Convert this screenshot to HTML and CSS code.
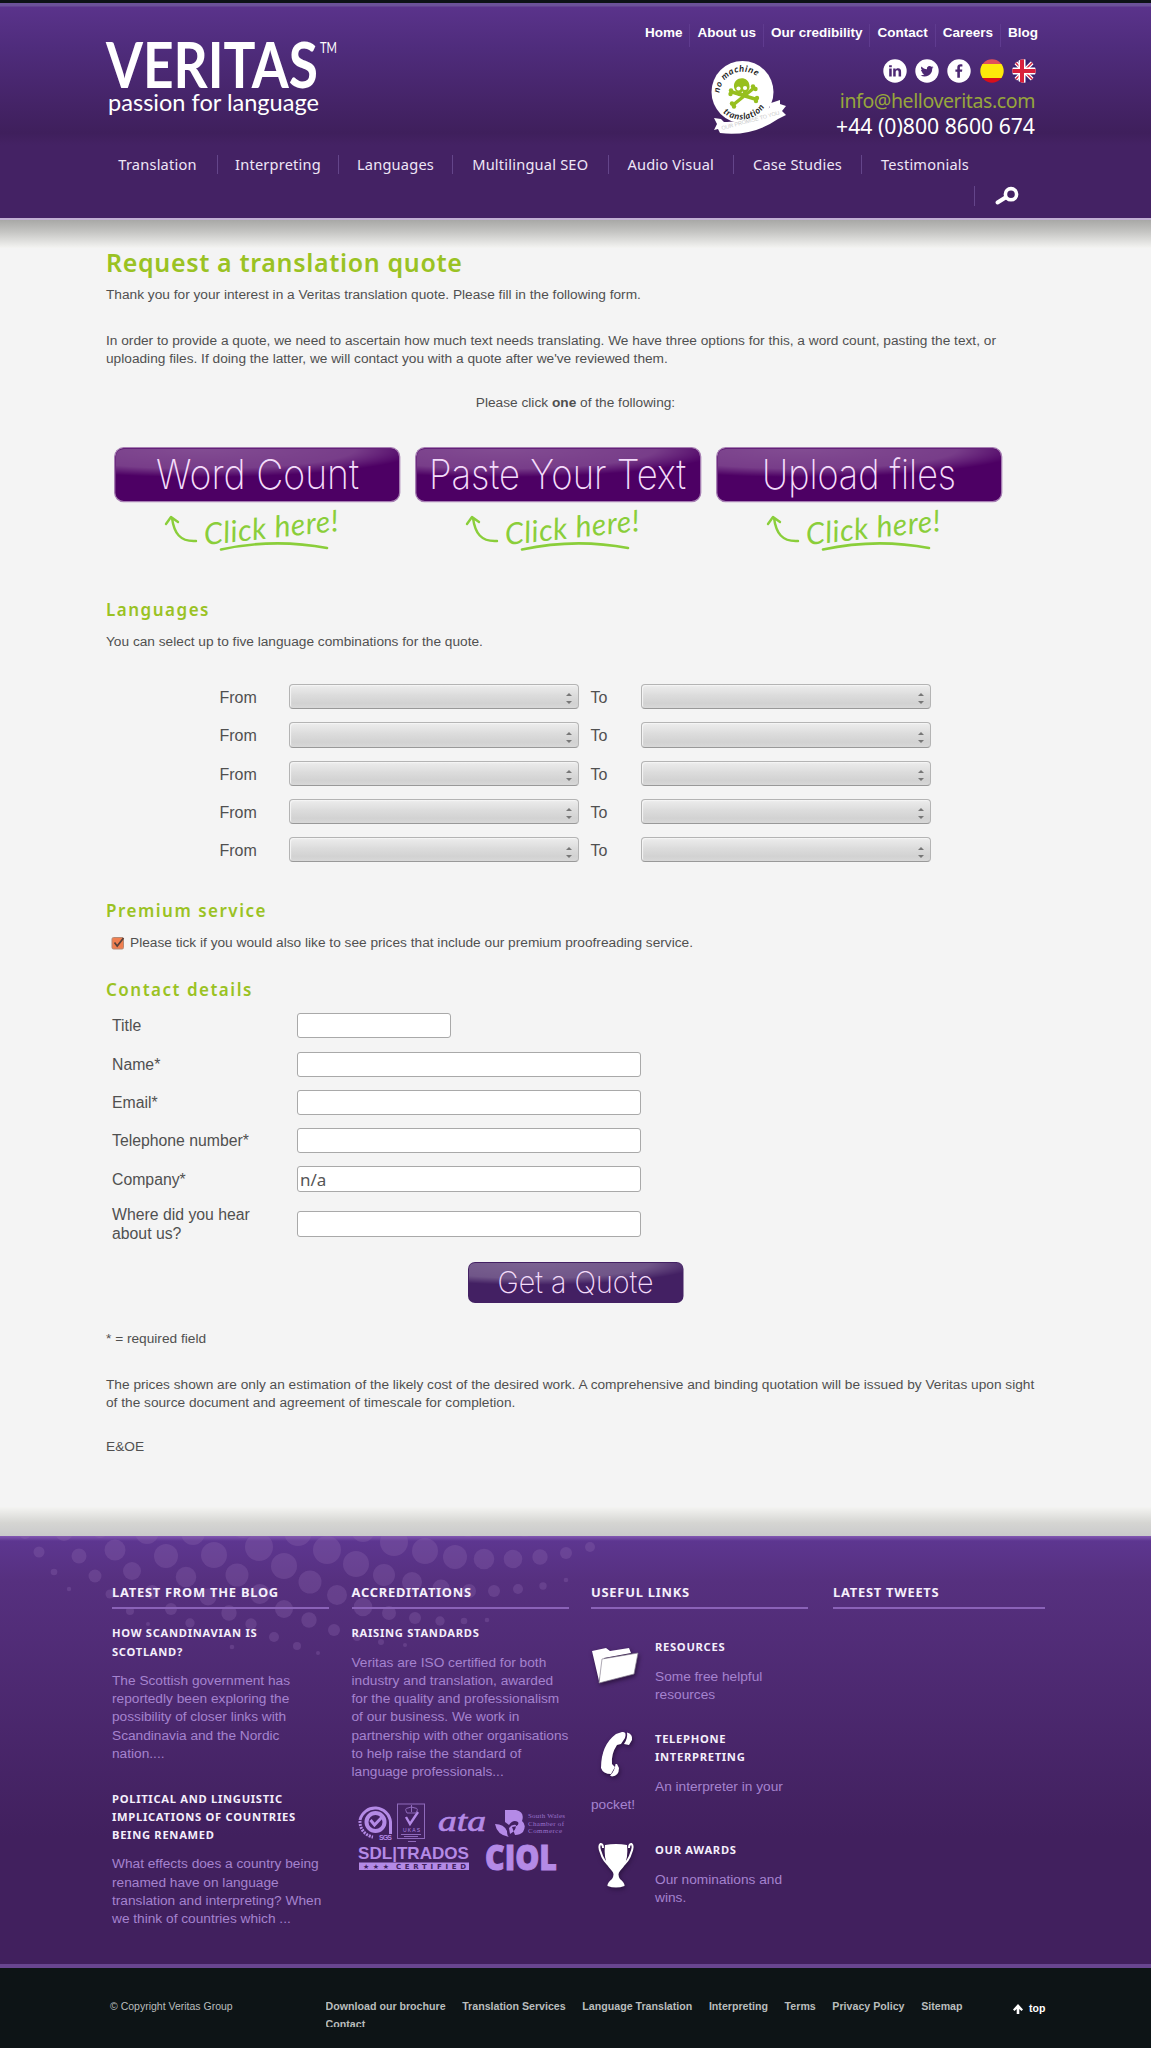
FILE: index.html
```html
<!DOCTYPE html>
<html lang="en">
<head>
<meta charset="utf-8">
<title>Request a translation quote - Veritas</title>
<link rel="stylesheet" href="styles.css">
</head>
<body>
<svg width="0" height="0" class="defs" aria-hidden="true">
  <defs>
    <radialGradient id="gloss" cx=".3" cy="0" r=".78"><stop offset="0" stop-color="#fff" stop-opacity=".3"/><stop offset=".7" stop-color="#fff" stop-opacity=".24"/><stop offset="1" stop-color="#fff" stop-opacity="0"/></radialGradient>
    <clipPath id="disc"><circle cx="12" cy="12" r="11.7"/></clipPath>
    <g id="click" fill="none" stroke="#8ace3a" stroke-linecap="round" stroke-linejoin="round">
      <path stroke-width="2.4" d="M82 94C66 95 60 86 58 71M52 77L57 70L64 75"/>
      <path stroke-width="2.6" d="M107 102.500Q160 91 213 101"/>
    </g>
  </defs>
</svg>
<header class="header">
  <div class="wrap top">
    <svg class="logo" width="240" height="90" viewBox="0 0 240 90" fill="#fff">
      <text class="logo-name" x="1" y="56" textLength="212" lengthAdjust="spacingAndGlyphs">VERITAS</text>
      <text class="logo-tm" x="215" y="20.500" textLength="17" lengthAdjust="spacingAndGlyphs">TM</text>
      <text class="logo-tag" x="3" y="79" textLength="211" lengthAdjust="spacingAndGlyphs">passion for language</text>
    </svg>
    <svg class="badge" width="90" height="90" viewBox="0 0 90 90">
      <path id="arcT" fill="none" d="M19.500 42A23 23 0 1 1 66 38"/>
      <path id="arcB" fill="none" d="M16 49A28 28 0 0 0 69 39"/>
      <circle cx="42.500" cy="37" r="31" fill="#fff"/>
      <path fill="#fff" d="M14 63L21 64L24 67Q50 68 70 52L68 49L80 45L80 49L86 51L82 56L86 60L78 64Q52 82 20 78L18 74L14 75L17 69Z"/>
      <text class="hand"><textPath href="#arcT" startOffset="4">no machine</textPath></text>
      <text class="hand"><textPath href="#arcB" startOffset="11">translation</textPath></text>
      <text class="promise" x="22" y="75" transform="rotate(-15 22 75)" textLength="60">OUR PROMISE TO YOU</text>
      <g stroke="#97bf1e" stroke-width="3.400" stroke-linecap="round"><path d="M32 37L55 44M33 50L54 33"/></g>
      <g fill="#97bf1e"><circle cx="31" cy="35.500" r="2.200"/><circle cx="30.500" cy="39" r="2.200"/><circle cx="57" cy="43" r="2.200"/><circle cx="56" cy="46" r="2.200"/><circle cx="32" cy="48.500" r="2.200"/><circle cx="34" cy="51.500" r="2.200"/><circle cx="53" cy="31.500" r="2.200"/><circle cx="55.500" cy="34" r="2.200"/><path d="M34 32C33 21 49 20 49.500 31C50 36 46 36 46 40L38 41C38 37 34.500 36 34 32Z"/></g>
      <circle cx="38.500" cy="33.500" r="2.100" fill="#fff"/><circle cx="45" cy="33" r="2.100" fill="#fff"/><path d="M41.500 38L42.300 36L43 38Z" fill="#fff"/>
    </svg>
    <div class="contact">
      <nav class="mini"><a>Home</a><a>About us</a><a>Our credibility</a><a>Contact</a><a>Careers</a><a>Blog</a></nav>
      <div class="social">
        <svg width="24" height="24" viewBox="0 0 24 24"><circle cx="12" cy="12" r="11.700" fill="#fff"/><path fill="#4c2873" d="M6.200 9.500h2.500v8H6.200zM6.100 6.200h2.700v2H6.100zM10.200 9.500h2.400v1.200c.6-1 1.400-1.400 2.500-1.400 2.200 0 3 1.300 3 3.600v4.600h-2.500v-4.200c0-1.300-.3-2-1.300-2-1.200 0-1.600.9-1.600 2.200v4h-2.500z"/></svg>
        <svg width="24" height="24" viewBox="0 0 24 24"><circle cx="12" cy="12" r="11.700" fill="#fff"/><path fill="#4c2873" d="M18.500 8.200c-.5.200-1 .4-1.500.4.500-.3 1-.8 1.200-1.400-.5.300-1.100.5-1.700.6a2.700 2.700 0 0 0-4.600 2.400c-2.200-.1-4.200-1.200-5.500-2.800-.7 1.200-.4 2.800.8 3.600-.4 0-.8-.1-1.200-.3 0 1.300.9 2.400 2.100 2.600-.4.100-.8.100-1.200 0 .3 1.100 1.300 1.800 2.500 1.900A5.400 5.400 0 0 1 5.500 16.300a7.600 7.600 0 0 0 11.700-6.800c.5-.3 1-.8 1.300-1.300z"/></svg>
        <svg width="24" height="24" viewBox="0 0 24 24"><circle cx="12" cy="12" r="11.700" fill="#fff"/><path fill="#4c2873" d="M10.300 18.700v-6H8.400v-2.300h1.900V8.600c0-2.200 1.200-3.300 3.200-3.300.9 0 1.600.1 1.900.1v2.200h-1.300c-1 0-1.200.5-1.200 1.200v1.600h2.400l-.3 2.300h-2.100v6z"/></svg>
        <svg width="24" height="24" viewBox="0 0 24 24"><g clip-path="url(#disc)"><path fill="#e0505a" d="M0 0h24v6H0z"/><path fill="#d8101a" d="M0 18h24v6H0z"/><path fill="#fdea0a" d="M0 5h24v14H0z"/></g></svg>
        <svg width="24" height="24" viewBox="0 0 24 24"><g clip-path="url(#disc)"><path fill="#3a2170" d="M0 0h24v24H0z"/><path stroke="#fff" stroke-width="4" d="M0 0L24 24M24 0L0 24"/><path stroke="#d8203c" stroke-width="1.500" d="M0 0L24 24M24 0L0 24"/><path stroke="#fff" stroke-width="7" d="M10 0V24M0 12H24"/><path stroke="#d8203c" stroke-width="4" d="M10 0V24M0 12H24"/></g></svg>
      </div>
      <div class="mail">info@helloveritas.com</div>
      <div class="phone">+44 (0)800 8600 674</div>
    </div>
  </div>
  <nav class="wrap nav"><a>Translation</a><a>Interpreting</a><a>Languages</a><a>Multilingual SEO</a><a>Audio Visual</a><a>Case Studies</a><a>Testimonials</a></nav>
  <div class="wrap search"><svg width="26" height="20" viewBox="0 0 26 20" fill="none" stroke="#fff"><circle cx="18" cy="8.200" r="5.600" stroke-width="3.600"/><path stroke-width="4" stroke-linecap="round" d="M12.500 11.500L4.500 16.500"/></svg></div>
</header>

<main class="main">
  <div class="wrap">
    <h1>Request a translation quote</h1>
    <p class="intro">Thank you for your interest in a Veritas translation quote. Please fill in the following form.</p>
    <p class="gap">In order to provide a quote, we need to ascertain how much text needs translating. We have three options for this, a word count, pasting the text, or<br>uploading files. If doing the latter, we will contact you with a quote after we've reviewed them.</p>
    <p class="choose">Please click <strong>one</strong> of the following:</p>
    <div class="options">
      <svg width="287" height="105" viewBox="0 0 287 105">
        <rect x=".7" y=".7" width="285" height="54" rx="9" fill="#4d0064" stroke="#a77fb3" stroke-width="1.300"/><path fill="url(#gloss)" d="M2 10Q2 2 10 2H277Q285 2 285 10V38H2Z"/>
        <text class="thin" x="42" y="41.500" textLength="203" lengthAdjust="spacingAndGlyphs">Word Count</text>
        <use href="#click"/><text class="scrawl" x="91" y="98" transform="rotate(-6 91 98)" textLength="135">Click here!</text>
      </svg>
      <svg width="287" height="105" viewBox="0 0 287 105">
        <rect x=".7" y=".7" width="285" height="54" rx="9" fill="#4d0064" stroke="#a77fb3" stroke-width="1.300"/><path fill="url(#gloss)" d="M2 10Q2 2 10 2H277Q285 2 285 10V38H2Z"/>
        <text class="thin" x="14" y="41.500" textLength="257" lengthAdjust="spacingAndGlyphs">Paste Your Text</text>
        <use href="#click"/><text class="scrawl" x="91" y="98" transform="rotate(-6 91 98)" textLength="135">Click here!</text>
      </svg>
      <svg width="287" height="105" viewBox="0 0 287 105">
        <rect x=".7" y=".7" width="285" height="54" rx="9" fill="#4d0064" stroke="#a77fb3" stroke-width="1.300"/><path fill="url(#gloss)" d="M2 10Q2 2 10 2H277Q285 2 285 10V38H2Z"/>
        <text class="thin" x="46" y="41.500" textLength="194" lengthAdjust="spacingAndGlyphs">Upload files</text>
        <use href="#click"/><text class="scrawl" x="91" y="98" transform="rotate(-6 91 98)" textLength="135">Click here!</text>
      </svg>
    </div>
    <h2 class="h-lang">Languages</h2>
    <p class="lead">You can select up to five language combinations for the quote.</p>
    <div class="pairs">
      <label>From</label><span class="select"></span><label>To</label><span class="select"></span>
      <label>From</label><span class="select"></span><label>To</label><span class="select"></span>
      <label>From</label><span class="select"></span><label>To</label><span class="select"></span>
      <label>From</label><span class="select"></span><label>To</label><span class="select"></span>
      <label>From</label><span class="select"></span><label>To</label><span class="select"></span>
    </div>
    <h2 class="h-prem">Premium service</h2>
    <p class="lead tick"><svg width="14" height="14" viewBox="0 0 14 14"><rect x="1" y="1.500" width="11.500" height="11.500" rx="1.500" fill="#f07f50" stroke="#b58a76"/><path fill="none" stroke="#57403a" stroke-width="1.700" d="M3.500 6.500L6.200 10L12.500 2"/></svg>Please tick if you would also like to see prices that include our premium proofreading service.</p>
    <h2 class="h-contact">Contact details</h2>
    <div class="form">
      <label>Title</label><input class="short">
      <label>Name*</label><input>
      <label>Email*</label><input>
      <label>Telephone number*</label><input>
      <label>Company*</label><input value="n/a">
      <label>Where did you hear<br>about us?</label><input>
    </div>
    <svg class="quote" width="216" height="41" viewBox="0 0 216 41">
      <rect width="215.500" height="41" rx="7" fill="#432063"/><path fill="url(#gloss)" d="M1 7Q1 1 7 1H209Q215 1 215 7V29H1Z"/>
      <text class="thin small" x="29.500" y="31" textLength="156" lengthAdjust="spacingAndGlyphs">Get a Quote</text>
    </svg>
    <p class="req">* = required field</p>
    <p class="gap">The prices shown are only an estimation of the likely cost of the desired work. A comprehensive and binding quotation will be issued by Veritas upon sight<br>of the source document and agreement of timescale for completion.</p>
    <p class="choose left">E&amp;OE</p>
  </div>
</main>

<footer class="footer">
  <svg class="dots" width="620" height="130" viewBox="0 0 620 130" fill="#8d68ad" fill-opacity=".32">
    <circle cx="25" cy="-3" r="6"/><circle cx="64" cy="-4" r="9"/><circle cx="100" cy="-7" r="9"/><circle cx="147" cy="-4" r="12"/><circle cx="193" cy="-3" r="12"/><circle cx="243" cy="-12" r="14"/><circle cx="298" cy="-4" r="14"/><circle cx="363" cy="-6" r="12"/><circle cx="468" cy="-9" r="10"/><circle cx="525" cy="-8" r="9"/>
    <circle cx="39" cy="16" r="5.500"/><circle cx="79" cy="20" r="7.500"/><circle cx="115" cy="14" r="10.500"/><circle cx="166" cy="20" r="12"/><circle cx="214" cy="19" r="13"/><circle cx="259" cy="11" r="14"/><circle cx="284" cy="30" r="13"/><circle cx="327" cy="14" r="14"/><circle cx="356" cy="28" r="13"/><circle cx="394" cy="6" r="14"/><circle cx="425" cy="15" r="13"/><circle cx="455" cy="21" r="12"/><circle cx="484" cy="23" r="10.300"/><circle cx="513" cy="23" r="9.300"/><circle cx="540" cy="21" r="7.700"/><circle cx="566" cy="17" r="6"/><circle cx="590" cy="11" r="5"/>
    <circle cx="54" cy="36" r="3.300"/><circle cx="95" cy="40" r="6.500"/><circle cx="132" cy="35" r="9"/><circle cx="186" cy="41" r="10.300"/><circle cx="237" cy="39" r="11.500"/><circle cx="310" cy="46" r="11.500"/><circle cx="384" cy="39" r="11"/><circle cx="412" cy="46" r="10"/><circle cx="441" cy="52" r="8.500"/><circle cx="469" cy="55" r="7"/><circle cx="494" cy="55" r="6"/><circle cx="518" cy="53" r="5"/><circle cx="543" cy="50" r="3.700"/><circle cx="566" cy="44" r="2.300"/>
    <circle cx="69" cy="53" r="2.200"/><circle cx="110" cy="58" r="4.500"/><circle cx="152" cy="56" r="7"/><circle cx="208" cy="61" r="8.500"/><circle cx="260" cy="58" r="10"/><circle cx="337" cy="59" r="10"/><circle cx="363" cy="71" r="9.300"/><circle cx="284" cy="73" r="9"/><circle cx="130" cy="75" r="4"/><circle cx="171" cy="73" r="6"/><circle cx="229" cy="77" r="7.700"/><circle cx="309" cy="84" r="7.700"/><circle cx="389" cy="77" r="7"/><circle cx="415" cy="82" r="6"/><circle cx="440" cy="85" r="4.700"/><circle cx="464" cy="85" r="3.300"/><circle cx="487" cy="84" r="2.300"/>
    <circle cx="148" cy="88" r="2"/><circle cx="190" cy="87" r="4.700"/><circle cx="251" cy="88" r="5.700"/><circle cx="334" cy="94" r="6"/><circle cx="274" cy="101" r="5"/><circle cx="297" cy="110" r="4"/><circle cx="318" cy="117" r="2"/><circle cx="232" cy="111" r="2.300"/><circle cx="357" cy="101" r="4"/><circle cx="381" cy="106" r="3"/><circle cx="405" cy="109" r="2"/>
  </svg>
  <div class="cols">
    <section>
      <h4>LATEST FROM THE BLOG</h4>
      <h5>HOW SCANDINAVIAN IS<br>SCOTLAND?</h5>
      <p>The Scottish government has<br>reportedly been exploring the<br>possibility of closer links with<br>Scandinavia and the Nordic<br>nation....</p>
      <h5 class="second">POLITICAL AND LINGUISTIC<br>IMPLICATIONS OF COUNTRIES<br>BEING RENAMED</h5>
      <p>What effects does a country being<br>renamed have on language<br>translation and interpreting? When<br>we think of countries which ...</p>
    </section>
    <section>
      <h4>ACCREDITATIONS</h4>
      <h5>RAISING STANDARDS</h5>
      <p>Veritas are ISO certified for both<br>industry and translation, awarded<br>for the quality and professionalism<br>of our business. We work in<br>partnership with other organisations<br>to help raise the standard of<br>language professionals...</p>
      <svg class="certs" width="217" height="75" viewBox="0 0 217 75" fill="#b48ae6">
        <g fill="none" stroke="#b48ae6"><path stroke-width="3" d="M38.500 34V22A15.500 15.500 0 0 0 8 20"/><path stroke-width="3" stroke-dasharray="2 1" d="M8 21A15.500 15.500 0 0 0 21 37"/><circle cx="23.500" cy="22" r="9" stroke-width="4"/><path stroke-width="3" d="M18.500 20L22.500 25L31 16"/></g>
        <text class="c-sgs" x="27" y="40" textLength="13">SGS</text>
        <g fill="none" stroke="#8f6abb"><rect x="45.500" y="4" width="27" height="34.500"/><path stroke="#b48ae6" stroke-width="2.400" d="M54 17L58 24L66 12"/><path d="M55 13Q52 8 56 8Q59 6 63 8Q67 8 64 13ZM59.500 5V12"/></g>
        <text class="c-tiny" x="51" y="32" textLength="17">UKAS</text><path fill="#8f6abb" d="M49 34h20v1H49zM52 36h14v1H52zM56 41h8v1h-8z"/>
        <text class="c-ata" x="86" y="31" textLength="48" lengthAdjust="spacingAndGlyphs">ata</text>
        <path fill-rule="evenodd" d="M153 10H164Q173 12 170 21Q175 25 171 32Q168 35 163 35L160 27Q168 26 166 22Q161 19 157 25L153 22ZM143 24Q152 24 155 31Q155 36 157 37Q145 35 143 24ZM157 28Q160 24 164 25Q164 31 158 34Z"/>
        <text class="c-ch" x="176" y="18" textLength="37">South Wales</text><text class="c-ch" x="176" y="25.500" textLength="36">Chamber of</text><text class="c-ch" x="176" y="33" textLength="34">Commerce</text>
        <text class="c-sdl" x="6" y="58.500" textLength="111" lengthAdjust="spacingAndGlyphs">SDL|TRADOS</text>
        <path d="M7 62.500H117V70H7Z"/><text class="c-cert" x="11" y="69" textLength="26">★★★</text><text class="c-cert" x="44" y="69" textLength="70">CERTIFIED</text>
        <text class="c-ciol" x="133" y="69.500" textLength="72" lengthAdjust="spacingAndGlyphs">CIOL</text>
      </svg>
    </section>
    <section>
      <h4>USEFUL LINKS</h4>
      <article class="a1">
        <svg width="64" height="60" viewBox="0 0 64 60" fill="#fff"><path d="M1 13L15 10L19 13L38 10L40 15L13 20L8 43Z"/><path stroke="#8b8494" stroke-width=".7" d="M11 21L47 15L43 36L8 45Z"/></svg>
        <h5>RESOURCES</h5>
        <p>Some free helpful<br>resources</p>
      </article>
      <article class="a2">
        <svg width="64" height="62" viewBox="0 0 64 62" fill="#fff"><path d="M31 2Q36 1 34 8L30 14L26 15Q20 24 21 34L24 37L20 44Q12 44 10 38Q10 15 25 4Z"/><path d="M36 2.500Q42 4 41 10L38 15L33 14Q37 8 36 2.500ZM26 34L28 38Q28 46 21 46.500L19 45.500Q24 41 24.500 34Z"/></svg>
        <h5>TELEPHONE<br>INTERPRETING</h5>
        <p>An interpreter in your<br>pocket!</p>
      </article>
      <article class="a3">
        <svg width="64" height="60" viewBox="0 0 64 60" fill="#fff"><path d="M14 4Q25 2 36 4Q38 22 29 30Q26 33 29 38Q34 42 33.500 45Q25 48 16.500 45Q16 42 21 38Q24 33 21 30Q12 22 14 4Z"/><path fill="none" stroke="#fff" stroke-width="2" d="M12 7Q12 3 9.500 3Q7 5 10 12Q12 20 20 26M38 7Q38 3 40.500 3Q43 5 40 12Q38 20 30 26"/></svg>
        <h5>OUR AWARDS</h5>
        <p>Our nominations and<br>wins.</p>
      </article>
    </section>
    <section>
      <h4>LATEST TWEETS</h4>
    </section>
  </div>
</footer>
<div class="bottom">
  <span class="copy">© Copyright Veritas Group</span>
  <div class="links"><a>Download our brochure</a><a>Translation Services</a><a>Language Translation</a><a>Interpreting</a><a>Terms</a><a>Privacy Policy</a><a>Sitemap</a><a>Contact</a></div>
  <a class="totop"><svg width="10" height="10" viewBox="0 0 10 10"><path fill="#fff" d="M5 0L10 5.500L8.500 7L6.300 5V10H3.700V5L1.500 7L0 5.500Z"/></svg>top</a>
</div>
</body>
</html>
```
FILE: styles.css
```css
* { box-sizing: border-box; }
body {
  margin: 0;
  width: 1151px;
  height: 2048px;
  overflow: hidden;
  background: #f4f4f4;
  color: #505050;
  font: 13.7px/18.25px "Liberation Sans", Arial, sans-serif;
}
.defs { display: block; }
svg { overflow: visible; }
.dots { overflow: hidden; }
h1, h2, h4, h5, p { margin: 0; white-space: nowrap; }
.wrap { width: 939px; margin-left: 106px; }

.header {
  height: 220px;
  border-top: 3px solid #0c1216;
  border-bottom: 2px solid #c2b0d3;
  background: linear-gradient(#6b5299 0 3px, #5a338b 4px, #4f2c7c 45px, #3f1f5c 130px, #442264 142px, #442264);
}
.top { display: flex; height: 139px; }
.logo { flex: none; margin-top: 29px; margin-left: -1px; }
.logo-name { font: bold 64px Lato, sans-serif; }
.logo-tm { font: 15px Lato, sans-serif; }
.logo-tag { font: 24px Lato, sans-serif; }
.badge { flex: none; margin: 52px 0 0 355px; }
.hand { font: italic bold 9px Lato, sans-serif; fill: #222; letter-spacing: .6px; }
.promise { font: 5.5px "Liberation Sans", sans-serif; fill: #c9c9c9; }
.contact { display: flex; flex-direction: column; align-items: flex-end; margin-left: -170px; width: 417px; flex: none; }
.mini { display: flex; height: 44px; padding-top: 21px; color: #fff; font-size: 13.5px; font-weight: bold; white-space: nowrap; margin-right: -1px; }
.mini a { padding: 0 7px; line-height: 18px; }
.mini a + a { border-left: 1px solid #5f3b8f; }
.mini a:last-child { padding-right: 0; }
.social { display: flex; gap: 8.3px; height: 36px; padding-top: 12px; margin-right: 1px; }
.social svg { flex: none; }
.mail, .phone { font-family: "Noto Sans", sans-serif; white-space: nowrap; margin-right: 2px; }
.mail { font-size: 19.500px; line-height: 26px; margin-top: 5px; color: #97a63c; letter-spacing: -.4px; }
.phone { font-size: 21.200px; line-height: 26px; margin-top: -1px; color: #fff; }
.nav {
  display: grid;
  grid-template-columns: 119px 121px 114px 155.5px 125.5px 128px 127px;
  margin-left: 98px;
  margin-top: 13px;
  height: 19px;
  color: #efe6f7;
  font: 14.6px/19px "Noto Sans", sans-serif;
  letter-spacing: .2px;
  text-align: center;
  white-space: nowrap;
}
.nav a + a { border-left: 1px solid #64458a; }
.search { display: flex; justify-content: flex-end; margin-top: 12px; height: 20px; padding-right: 26px; }
.search svg { box-sizing: content-box; padding-left: 18px; border-left: 1px solid #64458a; }

.main {
  height: 1316px;
  overflow: hidden;
  padding-top: 25.900px;
  background:
    linear-gradient(#a8a8a6, #c3c3c1 40%, #f4f4f2) 0 0 / 100% 28px no-repeat,
    linear-gradient(#f4f4f2, #d5d5d2 55%, #c9c9cb) 0 100% / 100% 29px no-repeat,
    #f4f4f4;
}
h1, h2 { font-family: "Noto Sans", sans-serif; font-weight: 600; color: #9ac223; }
h1 { font-size: 25px; line-height: 32px; letter-spacing: .65px; }
h2 { font-size: 17px; line-height: 24px; letter-spacing: 1.5px; }
.intro { margin-top: 8px; }
.gap { margin-top: 27.600px; }
.choose { margin-top: 26.200px; text-align: center; }
.choose.left { text-align: left; }
.options { display: flex; gap: 14px; margin: 34px 0 0 8px; height: 105px; }
.options svg { flex: none; }
.thin { font: 200 41px Inter, sans-serif; fill: #f3dcfa; }
.thin.small { font-size: 30px; }
.scrawl { font: italic 30px Lato, sans-serif; fill: #8ace3a; }
.h-lang { margin-top: 46.300px; }
.lead { margin-top: 11px; }
.pairs {
  display: grid;
  grid-template-columns: 69px 290px 62.500px 290px;
  grid-auto-rows: 25.300px;
  row-gap: 13.030px;
  margin: 32.700px 0 0 113.500px;
}
.pairs label { font-size: 16px; line-height: 27px; }
.pairs label:nth-of-type(even) { padding-left: 12px; }
.select {
  border: 1px solid #b4b4b4;
  border-bottom-color: #999;
  border-radius: 4px;
  background: linear-gradient(#ededed, #dcdcdc 45%, #d2d2d2 80%, #d8d8d8);
  box-shadow: inset 1px 1px 1px #f6f6f6;
  display: flex;
  flex-direction: column;
  align-items: flex-end;
  padding: 8.500px 6px 0 0;
  gap: 5px;
}
.select::before, .select::after { content: ""; border: 3px solid transparent; border-top: 0; border-bottom: 3px solid #777; }
.select::after { border-bottom: 0; border-top: 3px solid #777; }
.h-prem { margin-top: 36.500px; }
.tick { display: flex; gap: 5px; padding-left: 5px; }
.tick svg { margin-top: 2.500px; }
.h-contact { margin-top: 25.300px; }
.form {
  display: grid;
  grid-template-columns: 185px 344px;
  grid-template-rows: repeat(5, 25.300px) 38.600px;
  row-gap: 13.030px;
  margin: 11.700px 0 0 6px;
  align-items: center;
}
.form label { font-size: 15.800px; line-height: 19px; }
.form input {
  width: 344px;
  height: 25.300px;
  border: 1px solid #a9a9a9;
  border-radius: 3px;
  background: #fff;
  padding: 0 2px;
  color: #555;
  font: 17px/22px "Noto Sans", sans-serif;
}
.form input.short { width: 154px; }
.quote { display: block; margin: 18.300px 0 0 361.500px; }
.req { margin-top: 27.300px; }

.footer {
  position: relative;
  height: 432px;
  border-bottom: 4px solid #684590;
  background: linear-gradient(#8358b3, #5d3690 5px, #56307f 45px, #41205e 300px, #41205e);
}
.dots { position: absolute; left: 0; top: 0; }
.cols {
  position: relative;
  display: grid;
  grid-template-columns: 217px 217px 217px 212px;
  column-gap: 22.500px;
  padding: 45.800px 0 0 112px;
  color: #a583cf;
}
.cols section:last-child { margin-left: 2.500px; margin-right: -2.500px; }
h4, h5 { font-family: "Noto Sans", sans-serif; font-weight: 700; color: #f5effc; }
h4 { font-size: 12.900px; line-height: 21px; height: 27.400px; border-bottom: 2px solid #8a62b8; letter-spacing: .75px; }
h5 { font-size: 11.200px; line-height: 18.250px; margin-top: 15.200px; letter-spacing: .7px; }
.cols p { margin-top: 11px; }
h5.second { margin-top: 26.600px; }
.certs { display: block; margin-top: 18.500px; }
.c-sgs { font: bold 7px "Liberation Sans", sans-serif; }
.c-tiny { font: 5px "Liberation Sans", sans-serif; }
.c-ata { font: italic 29px "Liberation Serif", serif; stroke: #b48ae6; stroke-width: .6px; }
.c-ch { font: 7px "Liberation Serif", serif; fill: #9a72ca; }
.c-sdl { font: bold 17px "Liberation Sans", sans-serif; }
.c-cert { font: bold 7px "DejaVu Sans", sans-serif; fill: #41205e; }
.c-ciol { font: 800 35px "Open Sans", sans-serif; stroke: #b48ae6; stroke-width: 1px; }
article { height: 91.700px; }
article svg { float: left; filter: drop-shadow(1px 2px 2px #2b123f); }
article h5 { margin-top: 0; }
.a1 { margin-top: 29.200px; }
.a2 { height: 111.300px; }

.bottom {
  display: flex;
  height: 80px;
  padding: 28.500px 0 0 110px;
  background: #0d1416;
  color: #b9bdbd;
  font-size: 10.500px;
  line-height: 18.250px;
}
.copy { flex: none; width: 215.600px; padding-top: .5px; }
.links { display: flex; flex-wrap: wrap; column-gap: 16.600px; width: 660px; height: 30.500px; overflow: hidden; font-size: 10.650px; font-weight: bold; align-content: flex-start; }
.totop { display: flex; gap: 6px; align-items: center; height: 18px; margin: 3px 0 0 27.500px; color: #fff; font-weight: bold; }
```
